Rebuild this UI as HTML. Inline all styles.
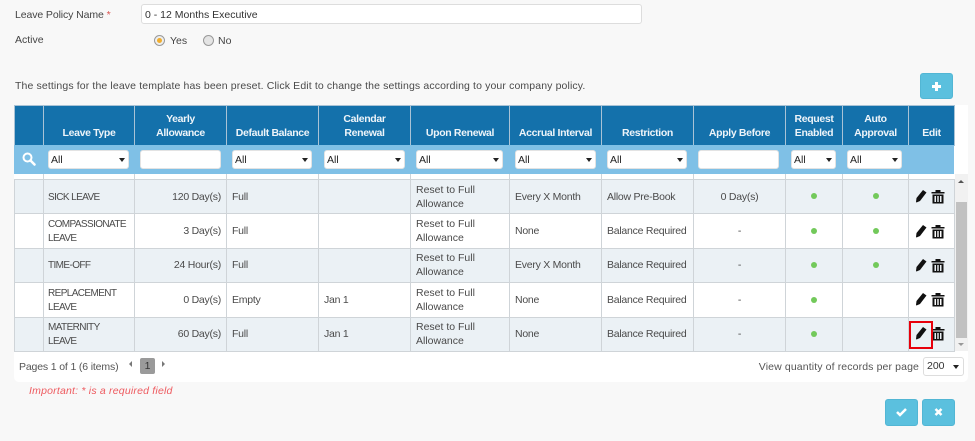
<!DOCTYPE html>
<html><head><meta charset="utf-8"><style>
*{box-sizing:border-box}
html,body{margin:0;padding:0}
body{width:975px;height:441px;background:#f8f8f8;position:relative;overflow:hidden;font-family:"Liberation Sans",sans-serif;font-size:10.5px;color:#444}
.a{position:absolute;white-space:nowrap}
#panel{position:absolute;left:14px;top:105px;width:954px;height:277px;background:#fff;border-radius:0 0 5px 5px}
table{position:absolute;left:14px;border-collapse:collapse;table-layout:fixed;width:940px}
td,th{border:1px solid #cfd4d8;padding:0 5px;font-weight:normal;overflow:hidden;line-height:14px;letter-spacing:-.25px}
#h th{background:#1471ab;color:#eef4f9;border-color:#a9c3d6;text-align:center;font-weight:bold;height:40px;vertical-align:bottom;padding:0 1px 5px;letter-spacing:-.35px}
#b td{height:34.4px;color:#4a4a4a}
#b td:nth-child(2){font-size:10px;letter-spacing:-.6px;padding:2px 0 0 4px}
#b td:nth-child(6){letter-spacing:0}
#b tr:nth-child(odd) td{background:#ebf1f5}
.r{text-align:right}.c{text-align:center}
.d{display:inline-block;width:6px;height:6px;border-radius:50%;background:#72c95a;vertical-align:middle;margin-top:-1px}
#f{position:absolute;left:14px;top:145px;width:940px;height:28.5px;background:#7fc0e6}
.s{position:absolute;top:150px;height:19px;background:#fff;border:1px solid #e3e3e3;border-radius:3px;font-size:10.5px;color:#222;padding:3px 0 0 2px;line-height:12px}
.s.v:after{content:"";position:absolute;right:3px;top:7px;border:3.5px solid transparent;border-top:4px solid #222;border-bottom:0}
.b{position:absolute;background:#5bc0de;border:1px solid #52b6d4;border-radius:3px}
svg{position:absolute;display:block}
</style></head><body>
<div class="a" style="left:15px;top:9px;letter-spacing:-.1px">Leave Policy Name <span style="color:#d9534f">*</span></div>
<div class="a" style="left:141px;top:4px;width:501px;height:20px;background:#fff;border:1px solid #ddd;border-radius:3px;padding:4px 3px 0;color:#333">0 - 12 Months Executive</div>
<div class="a" style="left:15px;top:34px">Active</div>
<div class="a" style="left:154px;top:35px;width:11px;height:11px;border-radius:50%;background:#eee;border:1px solid #999"></div>
<div class="a" style="left:157px;top:38px;width:5px;height:5px;border-radius:50%;background:#f0ad2e"></div>
<div class="a" style="left:170px;top:35px">Yes</div>
<div class="a" style="left:203px;top:35px;width:11px;height:11px;border-radius:50%;background:#e4e4e4;border:1px solid #999"></div>
<div class="a" style="left:218px;top:35px">No</div>
<div class="a" style="left:15px;top:80px;color:#4a4a4a;letter-spacing:.125px">The settings for the leave template has been preset. Click Edit to change the settings according to your company policy.</div>
<div class="b" style="left:920px;top:73px;width:33px;height:26px"></div>
<svg style="left:930px;top:80px" width="13" height="13" viewBox="0 0 13 13"><path d="M6.500 2V11M2 6.500H11" stroke="#fff" stroke-width="3" fill="none"/></svg>

<div id="panel"></div>
<table id="b" style="top:179px">
<colgroup><col style="width:29px"><col style="width:91px"><col style="width:92px"><col style="width:92px"><col style="width:92px"><col style="width:99px"><col style="width:92px"><col style="width:92px"><col style="width:92px"><col style="width:57px"><col style="width:66px"><col style="width:46px"></colgroup>
<tr><td></td><td>SICK LEAVE</td><td class="r">120 Day(s)</td><td>Full</td><td></td><td>Reset to Full Allowance</td><td>Every X Month</td><td>Allow Pre-Book</td><td class="c">0 Day(s)</td><td class="c"><i class="d"></i></td><td class="c"><i class="d"></i></td><td></td></tr>
<tr><td></td><td>COMPASSIONATE<br>LEAVE</td><td class="r">3 Day(s)</td><td>Full</td><td></td><td>Reset to Full Allowance</td><td>None</td><td>Balance Required</td><td class="c">-</td><td class="c"><i class="d"></i></td><td class="c"><i class="d"></i></td><td></td></tr>
<tr><td></td><td>TIME-OFF</td><td class="r">24 Hour(s)</td><td>Full</td><td></td><td>Reset to Full Allowance</td><td>Every X Month</td><td>Balance Required</td><td class="c">-</td><td class="c"><i class="d"></i></td><td class="c"><i class="d"></i></td><td></td></tr>
<tr><td></td><td>REPLACEMENT<br>LEAVE</td><td class="r">0 Day(s)</td><td>Empty</td><td>Jan 1</td><td>Reset to Full Allowance</td><td>None</td><td>Balance Required</td><td class="c">-</td><td class="c"><i class="d"></i></td><td></td><td></td></tr>
<tr><td></td><td>MATERNITY<br>LEAVE</td><td class="r">60 Day(s)</td><td>Full</td><td>Jan 1</td><td>Reset to Full Allowance</td><td>None</td><td>Balance Required</td><td class="c">-</td><td class="c"><i class="d"></i></td><td></td><td></td></tr>
</table>
<div class="a" style="left:14px;top:173px;width:940px;height:6px;background:#fff"></div>
<div class="a" style="left:43px;top:173px;width:1px;height:6px;background:#cfd4d8;box-shadow:91px 0 #cfd4d8,183px 0 #cfd4d8,275px 0 #cfd4d8,367px 0 #cfd4d8,466px 0 #cfd4d8,558px 0 #cfd4d8,650px 0 #cfd4d8,742px 0 #cfd4d8,799px 0 #cfd4d8,865px 0 #cfd4d8"></div>

<table id="h" style="top:105px">
<colgroup><col style="width:29px"><col style="width:91px"><col style="width:92px"><col style="width:92px"><col style="width:92px"><col style="width:99px"><col style="width:92px"><col style="width:92px"><col style="width:92px"><col style="width:57px"><col style="width:66px"><col style="width:46px"></colgroup>
<tr><th></th><th>Leave Type</th><th>Yearly<br>Allowance</th><th>Default Balance</th><th>Calendar<br>Renewal</th><th>Upon Renewal</th><th>Accrual Interval</th><th>Restriction</th><th>Apply Before</th><th>Request<br>Enabled</th><th>Auto<br>Approval</th><th>Edit</th></tr>
</table>
<div id="f"></div>
<svg style="left:22px;top:152px" width="14" height="14" viewBox="0 0 14 14"><circle cx="5.500" cy="5.500" r="4" fill="none" stroke="#fff" stroke-width="2"/><path d="M8.500 8.500L12.500 12.500" stroke="#fff" stroke-width="2.500" stroke-linecap="round"/></svg>
<div class="s v" style="left:48px;width:81px">All</div>
<div class="s" style="left:140px;width:81px"></div>
<div class="s v" style="left:232px;width:80px">All</div>
<div class="s v" style="left:324px;width:81px">All</div>
<div class="s v" style="left:416px;width:87px">All</div>
<div class="s v" style="left:515px;width:81px">All</div>
<div class="s v" style="left:607px;width:80px">All</div>
<div class="s" style="left:698px;width:81px"></div>
<div class="s v" style="left:791px;width:45px">All</div>
<div class="s v" style="left:847px;width:55px">All</div>

<!-- edit icons -->
<svg style="left:915px;top:189px" width="12" height="14" viewBox="0 0 12 14"><path d="M8 1L11.500 3.500L5 12L1.500 13.500L1 13L1.500 9Z" fill="#111"/></svg>
<svg style="left:915px;top:224px" width="12" height="14" viewBox="0 0 12 14"><path d="M8 1L11.500 3.500L5 12L1.500 13.500L1 13L1.500 9Z" fill="#111"/></svg>
<svg style="left:915px;top:258px" width="12" height="14" viewBox="0 0 12 14"><path d="M8 1L11.500 3.500L5 12L1.500 13.500L1 13L1.500 9Z" fill="#111"/></svg>
<svg style="left:915px;top:292px" width="12" height="14" viewBox="0 0 12 14"><path d="M8 1L11.500 3.500L5 12L1.500 13.500L1 13L1.500 9Z" fill="#111"/></svg>
<svg style="left:915px;top:326px" width="12" height="14" viewBox="0 0 12 14"><path d="M8 1L11.500 3.500L5 12L1.500 13.500L1 13L1.500 9Z" fill="#111"/></svg>
<svg style="left:931px;top:189px" width="14" height="15" viewBox="0 0 14 15"><path d="M0.500 3H4.500V1H9.500V3H13.500V4.500H0.500ZM1.500 5.500H12.500V14.500H1.500ZM3.500 7V13H5V7ZM6.300 7V13H7.700V7ZM9 7V13H10.500V7Z" fill="#111" fill-rule="evenodd"/></svg>
<svg style="left:931px;top:224px" width="14" height="15" viewBox="0 0 14 15"><path d="M0.500 3H4.500V1H9.500V3H13.500V4.500H0.500ZM1.500 5.500H12.500V14.500H1.500ZM3.500 7V13H5V7ZM6.300 7V13H7.700V7ZM9 7V13H10.500V7Z" fill="#111" fill-rule="evenodd"/></svg>
<svg style="left:931px;top:258px" width="14" height="15" viewBox="0 0 14 15"><path d="M0.500 3H4.500V1H9.500V3H13.500V4.500H0.500ZM1.500 5.500H12.500V14.500H1.500ZM3.500 7V13H5V7ZM6.300 7V13H7.700V7ZM9 7V13H10.500V7Z" fill="#111" fill-rule="evenodd"/></svg>
<svg style="left:931px;top:292px" width="14" height="15" viewBox="0 0 14 15"><path d="M0.500 3H4.500V1H9.500V3H13.500V4.500H0.500ZM1.500 5.500H12.500V14.500H1.500ZM3.500 7V13H5V7ZM6.300 7V13H7.700V7ZM9 7V13H10.500V7Z" fill="#111" fill-rule="evenodd"/></svg>
<svg style="left:931px;top:326px" width="14" height="15" viewBox="0 0 14 15"><path d="M0.500 3H4.500V1H9.500V3H13.500V4.500H0.500ZM1.500 5.500H12.500V14.500H1.500ZM3.500 7V13H5V7ZM6.300 7V13H7.700V7ZM9 7V13H10.500V7Z" fill="#111" fill-rule="evenodd"/></svg>
<div class="a" style="left:909px;top:321px;width:24px;height:28px;border:2px solid #e8000b"></div>

<!-- scrollbar -->
<div class="a" style="left:955px;top:174px;width:13px;height:177px;background:#f1f1f1"></div>
<div class="a" style="left:956px;top:202px;width:11px;height:136px;background:#c1c1c1"></div>
<div class="a" style="left:958px;top:180px;border:3px solid transparent;border-bottom:3px solid #555;border-top:0"></div>
<div class="a" style="left:958px;top:343px;border:3px solid transparent;border-top:3px solid #999;border-bottom:0"></div>

<!-- footer -->
<div class="a" style="left:19px;top:361px;color:#555;letter-spacing:-.15px">Pages 1 of 1 (6 items)</div>
<div class="a" style="left:129px;top:361px;border:3px solid transparent;border-right:3px solid #777;border-left:0"></div>
<div class="a" style="left:140px;top:358px;width:15px;height:16px;background:#9a9a9a;border-radius:2px;text-align:center;line-height:16px;color:#333">1</div>
<div class="a" style="left:162px;top:361px;border:3px solid transparent;border-left:3px solid #777;border-right:0"></div>
<div class="a" style="right:56px;top:361px;color:#555;letter-spacing:.12px">View quantity of records per page</div>
<div class="a" style="left:923px;top:357px;width:41px;height:19px;background:#fff;border:1px solid #ddd;border-radius:3px;padding:2px 0 0 3px;color:#333">200</div>
<div class="a" style="left:953px;top:365px;border:3.500px solid transparent;border-top:4px solid #222;border-bottom:0"></div>
<div class="a" style="left:29px;top:385px;color:#ee5a5f;font-style:italic;letter-spacing:.2px">Important: * is a required field</div>

<div class="b" style="left:885px;top:399px;width:33px;height:27px"></div>
<svg style="left:895px;top:406px" width="13" height="12" viewBox="0 0 13 12"><path d="M2 6L5 9L11 3" fill="none" stroke="#fff" stroke-width="2.500"/></svg>
<div class="b" style="left:922px;top:399px;width:33px;height:27px"></div>
<svg style="left:932px;top:406px" width="13" height="12" viewBox="0 0 13 12"><path d="M3.500 3L9.500 9M9.500 3L3.500 9" fill="none" stroke="#fff" stroke-width="2.500"/></svg>
</body></html>
